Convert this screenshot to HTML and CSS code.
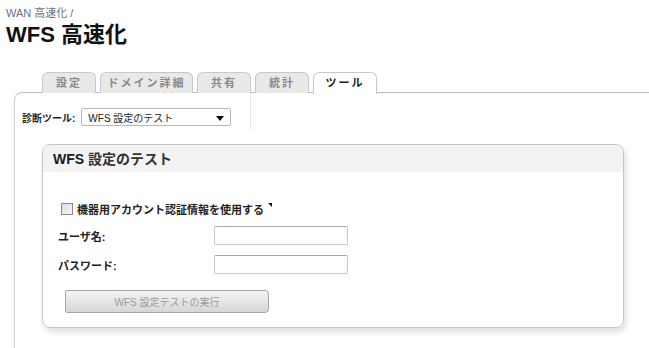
FILE: index.html
```html
<!DOCTYPE html>
<html lang="ja">
<head>
  <meta charset="UTF-8" />
  <title>WFS 高速化</title>
  <link rel="stylesheet" href="styles.css">
</head>
<body>
  <div class="breadcrumb">WAN 高速化 /</div>
  <h1 class="page-title">WFS 高速化</h1>

  <ul class="tabs">
    <li class="tab w-s">設定</li>
    <li class="tab w-l">ドメイン詳細</li>
    <li class="tab w-s">共有</li>
    <li class="tab w-s">統計</li>
    <li class="tab w-m active">ツール</li>
  </ul>

  <div class="panel">
    <div class="tool-row">
      <div class="tool-select">
        <label class="tool-label">診断ツール:</label>
        <div class="select">
          <span>WFS 設定のテスト</span>
          <span class="arrow"></span>
        </div>
      </div>
      <div class="divider"></div>
    </div>

    <div class="box">
      <div class="box-head"><b>WFS</b> 設定のテスト</div>
      <div class="box-body">
        <div class="check-row">
          <span class="checkbox"></span>
          <span class="check-label">機器用アカウント認証情報を使用する</span>
          <span class="corner"></span>
        </div>
        <div class="field">
          <label>ユーザ名:</label>
          <input type="text" />
        </div>
        <div class="field">
          <label>パスワード:</label>
          <input type="password" />
        </div>
        <button type="button" class="run-btn">WFS 設定テストの実行</button>
      </div>
    </div>
  </div>
</body>
</html>
```

FILE: styles.css
```css
* {
  margin: 0;
  padding: 0;
  box-sizing: border-box;
}

body {
  font-family: 'Liberation Sans', 'Noto Sans CJK JP', sans-serif;
  background: #fff;
  color: #222;
  width: 649px;
  height: 348px;
  overflow: hidden;
}

.breadcrumb {
  font-size: 11px;
  color: #6b7080;
  padding: 7px 0 0 6px;
  line-height: 13px;
}

.page-title {
  font-size: 22px;
  font-weight: bold;
  color: #111;
  padding: 2px 0 0 6px;
  line-height: 25px;
}

.tabs {
  list-style: none;
  display: flex;
  gap: 4px;
  margin: 25px 0 0 42px;
  height: 21px;
  position: relative;
  z-index: 1;
}

.tab {
  height: 21px;
  border: 1px solid #c8c8c8;
  border-bottom: none;
  border-radius: 6px 6px 0 0;
  background: #e9e9e9;
  color: #8a8a8a;
  font-size: 11px;
  font-weight: bold;
  letter-spacing: 2px;
  text-align: center;
  line-height: 20px;
}

.w-s { width: 54px; }
.w-m { width: 64px; }
.w-l { width: 93px; }

.tab.active {
  background: #fff;
  color: #222;
  height: 22px;
}

.panel {
  margin: -1px 0 0 14px;
  border-top: 1px solid #bcbcbc;
  border-left: 1px solid #d0d0d0;
  border-top-left-radius: 8px;
  height: 260px;
}

.tool-row {
  display: flex;
  align-items: flex-start;
}

.tool-select {
  display: flex;
  align-items: center;
  gap: 6px;
  padding: 15px 0 0 7px;
}

.tool-label {
  font-size: 10px;
  font-weight: bold;
  color: #222;
}

.select {
  width: 150px;
  height: 18px;
  border: 1px solid #b8b8b8;
  border-radius: 2px;
  font-size: 10px;
  color: #222;
  padding: 0 6px;
  display: flex;
  align-items: center;
  justify-content: space-between;
}

.arrow {
  width: 0;
  height: 0;
  border-left: 4px solid transparent;
  border-right: 4px solid transparent;
  border-top: 5px solid #111;
  margin-top: 3px;
}

.divider {
  width: 1px;
  height: 36px;
  background: #e2e2e2;
  margin-left: 19px;
}

.box {
  margin: 15px 0 0 27px;
  width: 582px;
  height: 184px;
  border: 1px solid #c6c6c6;
  border-radius: 8px;
  box-shadow: 2px 4px 6px rgba(0, 0, 0, 0.13);
  overflow: hidden;
}

.box-head {
  background: #f3f3f3;
  height: 27px;
  line-height: 28px;
  padding-left: 10px;
  font-size: 14px;
  font-weight: bold;
  color: #333;
}

.box-head b {
  color: #1a1a1a;
}

.box-body {
  padding: 30px 0 0 15px;
}

.check-row {
  display: flex;
  align-items: center;
  padding-left: 3px;
  height: 13px;
}

.checkbox {
  width: 12px;
  height: 12px;
  border: 1px solid #8a8a8a;
  background: linear-gradient(135deg, #dcdcdc, #f6f6f6);
  margin-right: 4px;
}

.check-label {
  font-size: 11px;
  font-weight: bold;
  color: #222;
}

.corner {
  width: 0;
  height: 0;
  border-top: 4px solid #111;
  border-left: 4px solid transparent;
  margin: -8px 0 0 4px;
}

.field {
  display: flex;
  align-items: center;
  height: 19px;
  margin-top: 10px;
}

.check-row + .field {
  margin-top: 11px;
}

.field label {
  width: 156px;
  font-size: 11px;
  font-weight: bold;
  color: #222;
}

.field input {
  width: 134px;
  height: 19px;
  border: 1px solid #c8c8c8;
  border-top-color: #a8a8a8;
  border-radius: 2px;
  outline: none;
}

.run-btn {
  display: block;
  margin: 16px 0 0 7px;
  width: 204px;
  height: 23px;
  border: 1px solid #a8a8a8;
  border-radius: 2px 4px 4px 2px;
  background: linear-gradient(#f4f4f4, #d6d6d6);
  color: #9a9a9a;
  font-family: inherit;
  font-size: 10px;
}
```
